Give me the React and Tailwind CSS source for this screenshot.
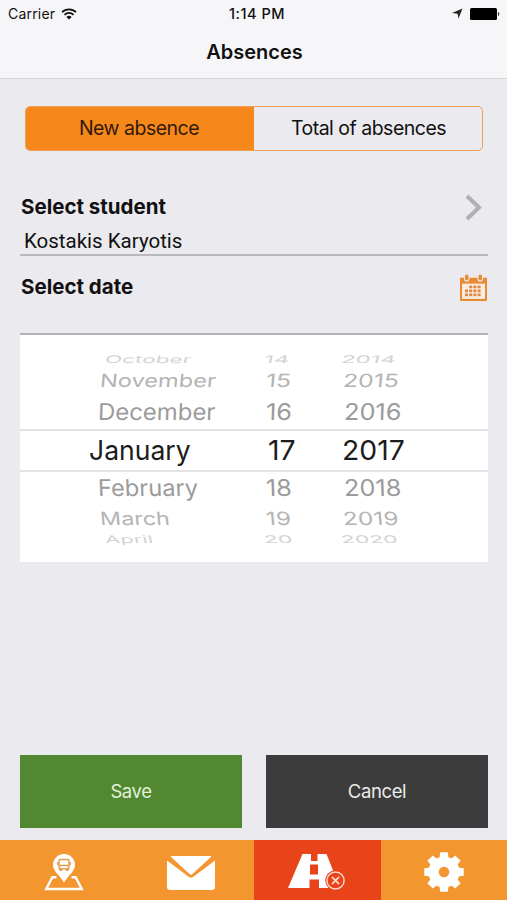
import React, { useState } from "react";

// left edge of each column in the wheel, plus the curve of the row
const wheelRows = [
  { height: "h-[16px]", tone: "text-[#d3d3d3]", x: 0.82, digitX: 0.87, y: 0.38, skew: -6, cells: [["October", 85], ["14", 244], ["2014", 321]] },
  { height: "h-[26px]", tone: "text-[#b4b4b4]", x: 0.86, digitX: 0.9, y: 0.66, skew: -4, cells: [["November", 80], ["15", 246], ["2015", 323]] },
  { height: "h-[35px]", tone: "text-[#9b9b9b]", x: 0.87, digitX: 0.92, y: 0.84, skew: -2, cells: [["December", 78], ["16", 246], ["2016", 324]] },
  { height: "h-[43px]", tone: "text-[#1c1c1c]", x: 0.965, digitX: 1.03, y: 1, skew: 0, selected: true, cells: [["January", 69], ["17", 248], ["2017", 322]] },
  { height: "h-[31px]", tone: "text-[#9b9b9b]", x: 0.86, digitX: 0.92, y: 0.84, skew: 2, cells: [["February", 78], ["18", 246], ["2018", 324]] },
  { height: "h-[31px]", tone: "text-[#b4b4b4]", x: 0.85, digitX: 0.89, y: 0.66, skew: 4, cells: [["March", 80], ["19", 246], ["2019", 323]] },
  { height: "h-[11px]", tone: "text-[#d3d3d3]", x: 0.8, digitX: 0.83, y: 0.38, skew: 6, cells: [["April", 85], ["20", 244], ["2020", 321]] },
];

function WheelCell({ label, row, scaleX, width }) {
  return (
    <div className="shrink-0 whitespace-nowrap leading-none" style={{ width }}>
      <span
        className="inline-block origin-left text-[27.5px] leading-none"
        style={{ transform: `scale(${scaleX}, ${row.y}) skewX(${row.skew}deg)` }}
      >
        {label}
      </span>
    </div>
  );
}

function WheelRow({ row }) {
  const [month, day, year] = row.cells;
  return (
    <div
      className={`flex items-center overflow-hidden ${row.height} ${row.tone} ${row.selected ? "border-y-2 border-[#e2e2e4]" : ""}`}
      style={{ paddingLeft: month[1] }}
    >
      <WheelCell label={month[0]} row={row} scaleX={row.x} width={day[1] - month[1]} />
      <WheelCell label={day[0]} row={row} scaleX={row.digitX} width={year[1] - day[1]} />
      <WheelCell label={year[0]} row={row} scaleX={row.digitX} width={100} />
    </div>
  );
}

function WifiIcon() {
  return (
    <svg width="16" height="12" viewBox="0 0 16 12" fill="none" stroke="#111" strokeWidth="1.8">
      <path d="M1 4.2a10 10 0 0 1 14 0" />
      <path d="M3.5 6.8a6.4 6.4 0 0 1 9 0" />
      <path d="M8 11.6 5.4 9a3.7 3.7 0 0 1 5.2 0z" fill="#111" stroke="none" />
    </svg>
  );
}

function CalendarIcon() {
  return (
    <svg width="27" height="27" viewBox="0 0 27 28" preserveAspectRatio="none">
      <path d="M0 4h27v23a1 1 0 0 1-1 1H1a1 1 0 0 1-1-1z" fill="#e98a35" />
      <path d="M2 10h23v15.8H2z" fill="#f9ede3" />
      <rect x="4" y="0" width="5.5" height="8" rx="2.7" fill="#ebeaee" />
      <rect x="17.5" y="0" width="5.5" height="8" rx="2.7" fill="#ebeaee" />
      <rect x="5" y="0.5" width="3.5" height="6.2" rx="1.7" fill="#e98a35" />
      <rect x="18.5" y="0.5" width="3.5" height="6.2" rx="1.7" fill="#e98a35" />
      <g fill="#e0893e">
        {[9.2, 13.4, 17.6].map((x) => <rect key={x} x={x} y="12" width="3" height="2.8" />)}
        {[16.1, 20.2].map((y) => [5, 9.2, 13.4, 17.6].map((x) => <rect key={`${x}-${y}`} x={x} y={y} width="3" height="2.8" />))}
      </g>
    </svg>
  );
}

function BusPinIcon() {
  return (
    <svg className="-ml-px" width="40" height="37" viewBox="0 0 40 37">
      <path d="M12.5 23.2H8.4L2.2 35h35.6l-6.2-11.8h-4.1" fill="none" stroke="#fff" strokeWidth="2.4" />
      <path d="M20 28.5C16.5 22 9 17.5 9 11a11 11 0 0 1 22 0c0 6.5-7.5 11-11 17.500z" fill="#fff" />
      <g fill="none" stroke="#e59a4a" strokeWidth="1.4">
        <rect x="15" y="5.5" width="10" height="9.5" rx="1.5" />
        <path d="M15 11.5h10M13.8 8v3M26.2 8v3" />
      </g>
      <path d="M15.5 14H18v3h-2.500zM22 14h2.500v3H22z" fill="#e59a4a" />
    </svg>
  );
}

function MailIcon() {
  return (
    <svg className="-ml-[2px]" width="48" height="34" viewBox="0 0 48 34" fill="#fff">
      <path d="M3.5.5A3 3 0 0 1 5 0h38a3 3 0 0 1 1.500.5L25.500 18c-1 .9-2 .9-3 0z" />
      <path d="M0 4.5 22 21c1.400 1 2.600 1 4 0L48 4.500V31a3 3 0 0 1-3 3H3a3 3 0 0 1-3-3z" />
    </svg>
  );
}

function RoadIcon() {
  return (
    <svg className="-ml-[3px]" width="58" height="37" viewBox="0 0 58 37">
      <path d="M14.500 0H23v7h6.500V0h9L52 34H31v-8.500h-9.500V34H0z" fill="#fff" />
      <path d="M22 10.500h8V20.500h-8z" fill="#e9431a" />
      <circle cx="47.5" cy="26.5" r="10.300" fill="#e9431a" />
      <circle cx="47.5" cy="26.5" r="8.600" fill="none" stroke="#fbd9cc" strokeWidth="1.500" />
      <path d="m43.900 22.900 7.200 7.200m0-7.200-7.200 7.200" stroke="#fbd9cc" strokeWidth="1.700" />
    </svg>
  );
}

function GearIcon() {
  return (
    <svg className="-ml-[2px] -mt-px" width="40" height="40" viewBox="-20 -20 40 40">
      <g fill="#fff">
        <circle r="15.500" />
        {[0, 45, 90, 135, 180, 225, 270, 315].map((deg) => (
          <path key={deg} d="M-4.500-13l.700-6.700h7.600l.700 6.700z" transform={`rotate(${deg})`} />
        ))}
      </g>
      <circle r="5.300" fill="#f39630" />
    </svg>
  );
}

const tabs = [
  { id: "map", label: "Map", icon: <BusPinIcon /> },
  { id: "messages", label: "Messages", icon: <MailIcon /> },
  { id: "absences", label: "Absences", icon: <RoadIcon /> },
  { id: "settings", label: "Settings", icon: <GearIcon /> },
];

export default function App() {
  const [view, setView] = useState("new");
  const [activeTab, setActiveTab] = useState("absences");

  return (
    <div className="flex h-[900px] w-[507px] flex-col overflow-hidden bg-[#ebeaee] font-['Inter',sans-serif] text-[#111]">
      <header className="h-[79px] shrink-0 border-b border-[#d6d6d9] bg-[#f6f6f8]">
        <div className="grid h-[27px] grid-cols-3 items-center pl-2 pr-[7px] text-sm">
          <div className="flex items-center gap-[6px]">
            <span className="text-[14px] tracking-[0.2px]">Carrier</span>
            <WifiIcon />
          </div>
          <div className="pl-[6px] pt-px text-center text-[14.5px] font-medium tracking-[0.5px]">1:14 PM</div>
          <div className="flex items-center justify-end gap-[7px]">
            <svg width="11" height="11" viewBox="0 0 11 11">
              <path d="M10.500.5 6.500 10.500 5.600 5.700 0 5z" fill="#222" />
            </svg>
            <svg width="30" height="12" viewBox="0 0 30 12">
              <rect width="27" height="12" rx="1.500" fill="#000" />
              <path d="M28 4c1.700.500 1.700 3.500 0 4z" fill="#333" />
            </svg>
          </div>
        </div>
        <h1 className="pl-[2px] pt-[11px] text-center text-[20px] font-semibold leading-7">Absences</h1>
      </header>

      <main className="flex flex-1 flex-col pl-5 pr-[19px] pt-[27px]">
        <div className="mx-[5px] flex h-[45px] shrink-0 overflow-hidden rounded-[5px] border-[1.500px] border-[#eda05a] text-[19.5px] tracking-[-0.5px]">
          <button onClick={() => setView("new")} className={`w-[228px] pr-[2px] pt-px ${view === "new" ? "bg-[#f6881b] text-[#32190a]" : ""}`}>New absence</button>
          <button onClick={() => setView("total")} className={`flex-1 pl-px pt-px ${view === "total" ? "bg-[#f6881b] text-[#32190a]" : ""}`}>Total of absences</button>
        </div>

        <div className="mt-[41px] h-[64px] shrink-0 border-b-2 border-[#b9b9be]">
          <div className="flex h-[30px] items-center justify-between pl-px pr-[6px] pt-px">
            <h2 className="text-[20.5px] font-bold">Select student</h2>
            <svg width="17" height="27" viewBox="0 0 17 27" fill="none" stroke="#b0b0b4" strokeWidth="4">
              <path d="m2 2 12 11.500L2 25" />
            </svg>
          </div>
          <p className="pl-1 pt-[7px] font-['Roboto',sans-serif] text-[20.5px] leading-6">Kostakis Karyotis</p>
        </div>

        <div className="flex h-[79px] shrink-0 items-start justify-between border-b-2 border-[#b1b1b6] pl-px pr-px pt-[18px]">
          <h2 className="text-[20.5px] font-bold leading-[26px]">Select date</h2>
          <CalendarIcon />
        </div>

        <div className="h-[227px] shrink-0 bg-white pt-[17px]">
          {wheelRows.map((row) => (
            <WheelRow key={row.cells[0][0]} row={row} />
          ))}
        </div>

        <div className="mb-[12px] mt-auto flex h-[73px] shrink-0 gap-6 text-[18.5px] tracking-[-0.4px]">
          <button className="w-[222px] bg-[#518831] text-[#e2f2da]">Save</button>
          <button className="w-[222px] bg-[#3c3c3c] text-[#ebebeb]">Cancel</button>
        </div>
      </main>

      <nav className="grid h-[60px] shrink-0 grid-cols-[127px_127px_127px_126px] bg-[#f39630]">
        {tabs.map((tab) => (
          <button
            key={tab.id}
            aria-label={tab.label}
            onClick={() => setActiveTab(tab.id)}
            className={`flex items-center justify-center pl-[2px] pt-[5px] ${activeTab === tab.id ? "bg-[#e9431a]" : ""}`}
          >
            {tab.icon}
          </button>
        ))}
      </nav>
    </div>
  );
}
